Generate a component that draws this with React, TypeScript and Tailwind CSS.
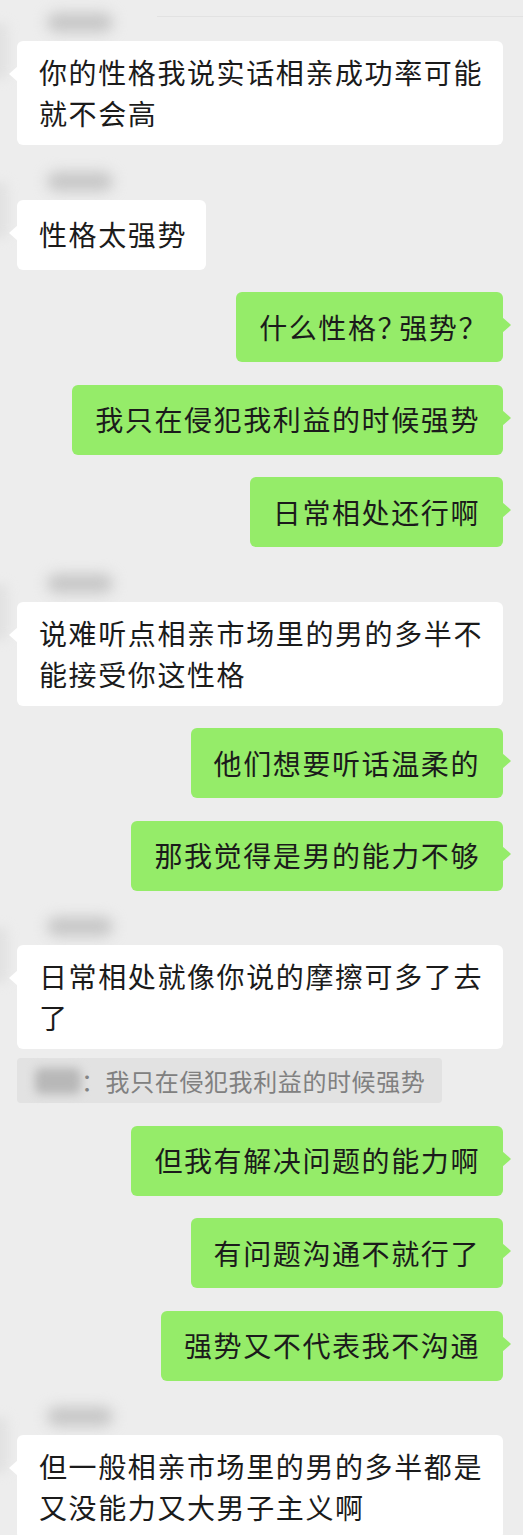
import React from 'react';

const font = { fontFamily: '"Noto Sans CJK SC", "Noto Sans", sans-serif' };

const Name = () => (
  <div className="h-[32px] pt-[4px] pl-[30px]">
    <div className="w-[66px] h-[19px] rounded-full bg-[#c6c6c6] blur-[7px]" />
  </div>
);

const LeftGroup = ({ children, quote }: { children: React.ReactNode; quote?: string }) => (
  <div className="flex">
    <div className="shrink-0 w-[60px] h-[56px] -ml-[52px] mr-[9px] mt-[14px] rounded-md bg-[#dcdcdc] blur-[6px] opacity-70" />
    <div className="flex flex-col min-w-0">
      <Name />
      <div className="relative max-w-[486px] min-h-[70px] flex items-center rounded-[6px] bg-white pl-[22px] pr-[19px] py-[11px] text-[28px] leading-[41px] tracking-[1.6px] text-[#1b1b1b]">
        <div className="absolute -left-[8px] top-[25px] w-0 h-0 border-y-[8px] border-y-transparent border-r-[9px] border-r-white" />
        <p>{children}</p>
      </div>
      {quote && (
        <div className="mt-[9px] w-[425px] h-[45px] flex items-center rounded-[4px] bg-[#e2e2e2] pl-[18px] text-[24px] tracking-[0.6px] text-[#808080]">
          <div className="w-[46px] h-[26px] rounded-md bg-[#b8b8b8] blur-[5px]" />
          <span>：{quote}</span>
        </div>
      )}
    </div>
  </div>
);

const Right = ({ children }: { children: React.ReactNode }) => (
  <div className="flex justify-end pr-[20px]">
    <div className="relative min-h-[70px] flex items-center rounded-[6px] bg-[#95ec69] px-[23px] py-[11px] text-[28px] leading-[41px] tracking-[1.6px] text-[#1b1b1b]">
      <p>{children}</p>
      <div className="absolute -right-[8px] top-[25px] w-0 h-0 border-y-[8px] border-y-transparent border-l-[9px] border-l-[#95ec69]" />
    </div>
  </div>
);

const Q = () => <span className="tracking-[-6.4px]">？</span>;

export default function App() {
  return (
    <div className="w-full h-[1535px] overflow-hidden bg-[#ededed]" style={font}>
      <div className="ml-[157px] h-[17px] border-b border-[#e2e2e2]" />
      <div className="-mt-[8px] flex flex-col gap-[22.5px]">
        <LeftGroup>你的性格我说实话相亲成功率可能就不会高</LeftGroup>
        <LeftGroup>性格太强势</LeftGroup>
        <Right>
          什么性格<Q />强势<Q />
        </Right>
        <Right>我只在侵犯我利益的时候强势</Right>
        <Right>日常相处还行啊</Right>
        <LeftGroup>说难听点相亲市场里的男的多半不能接受你这性格</LeftGroup>
        <Right>他们想要听话温柔的</Right>
        <Right>那我觉得是男的能力不够</Right>
        <LeftGroup quote="我只在侵犯我利益的时候强势">日常相处就像你说的摩擦可多了去了</LeftGroup>
        <Right>但我有解决问题的能力啊</Right>
        <Right>有问题沟通不就行了</Right>
        <Right>强势又不代表我不沟通</Right>
        <LeftGroup>但一般相亲市场里的男的多半都是又没能力又大男子主义啊</LeftGroup>
      </div>
    </div>
  );
}
